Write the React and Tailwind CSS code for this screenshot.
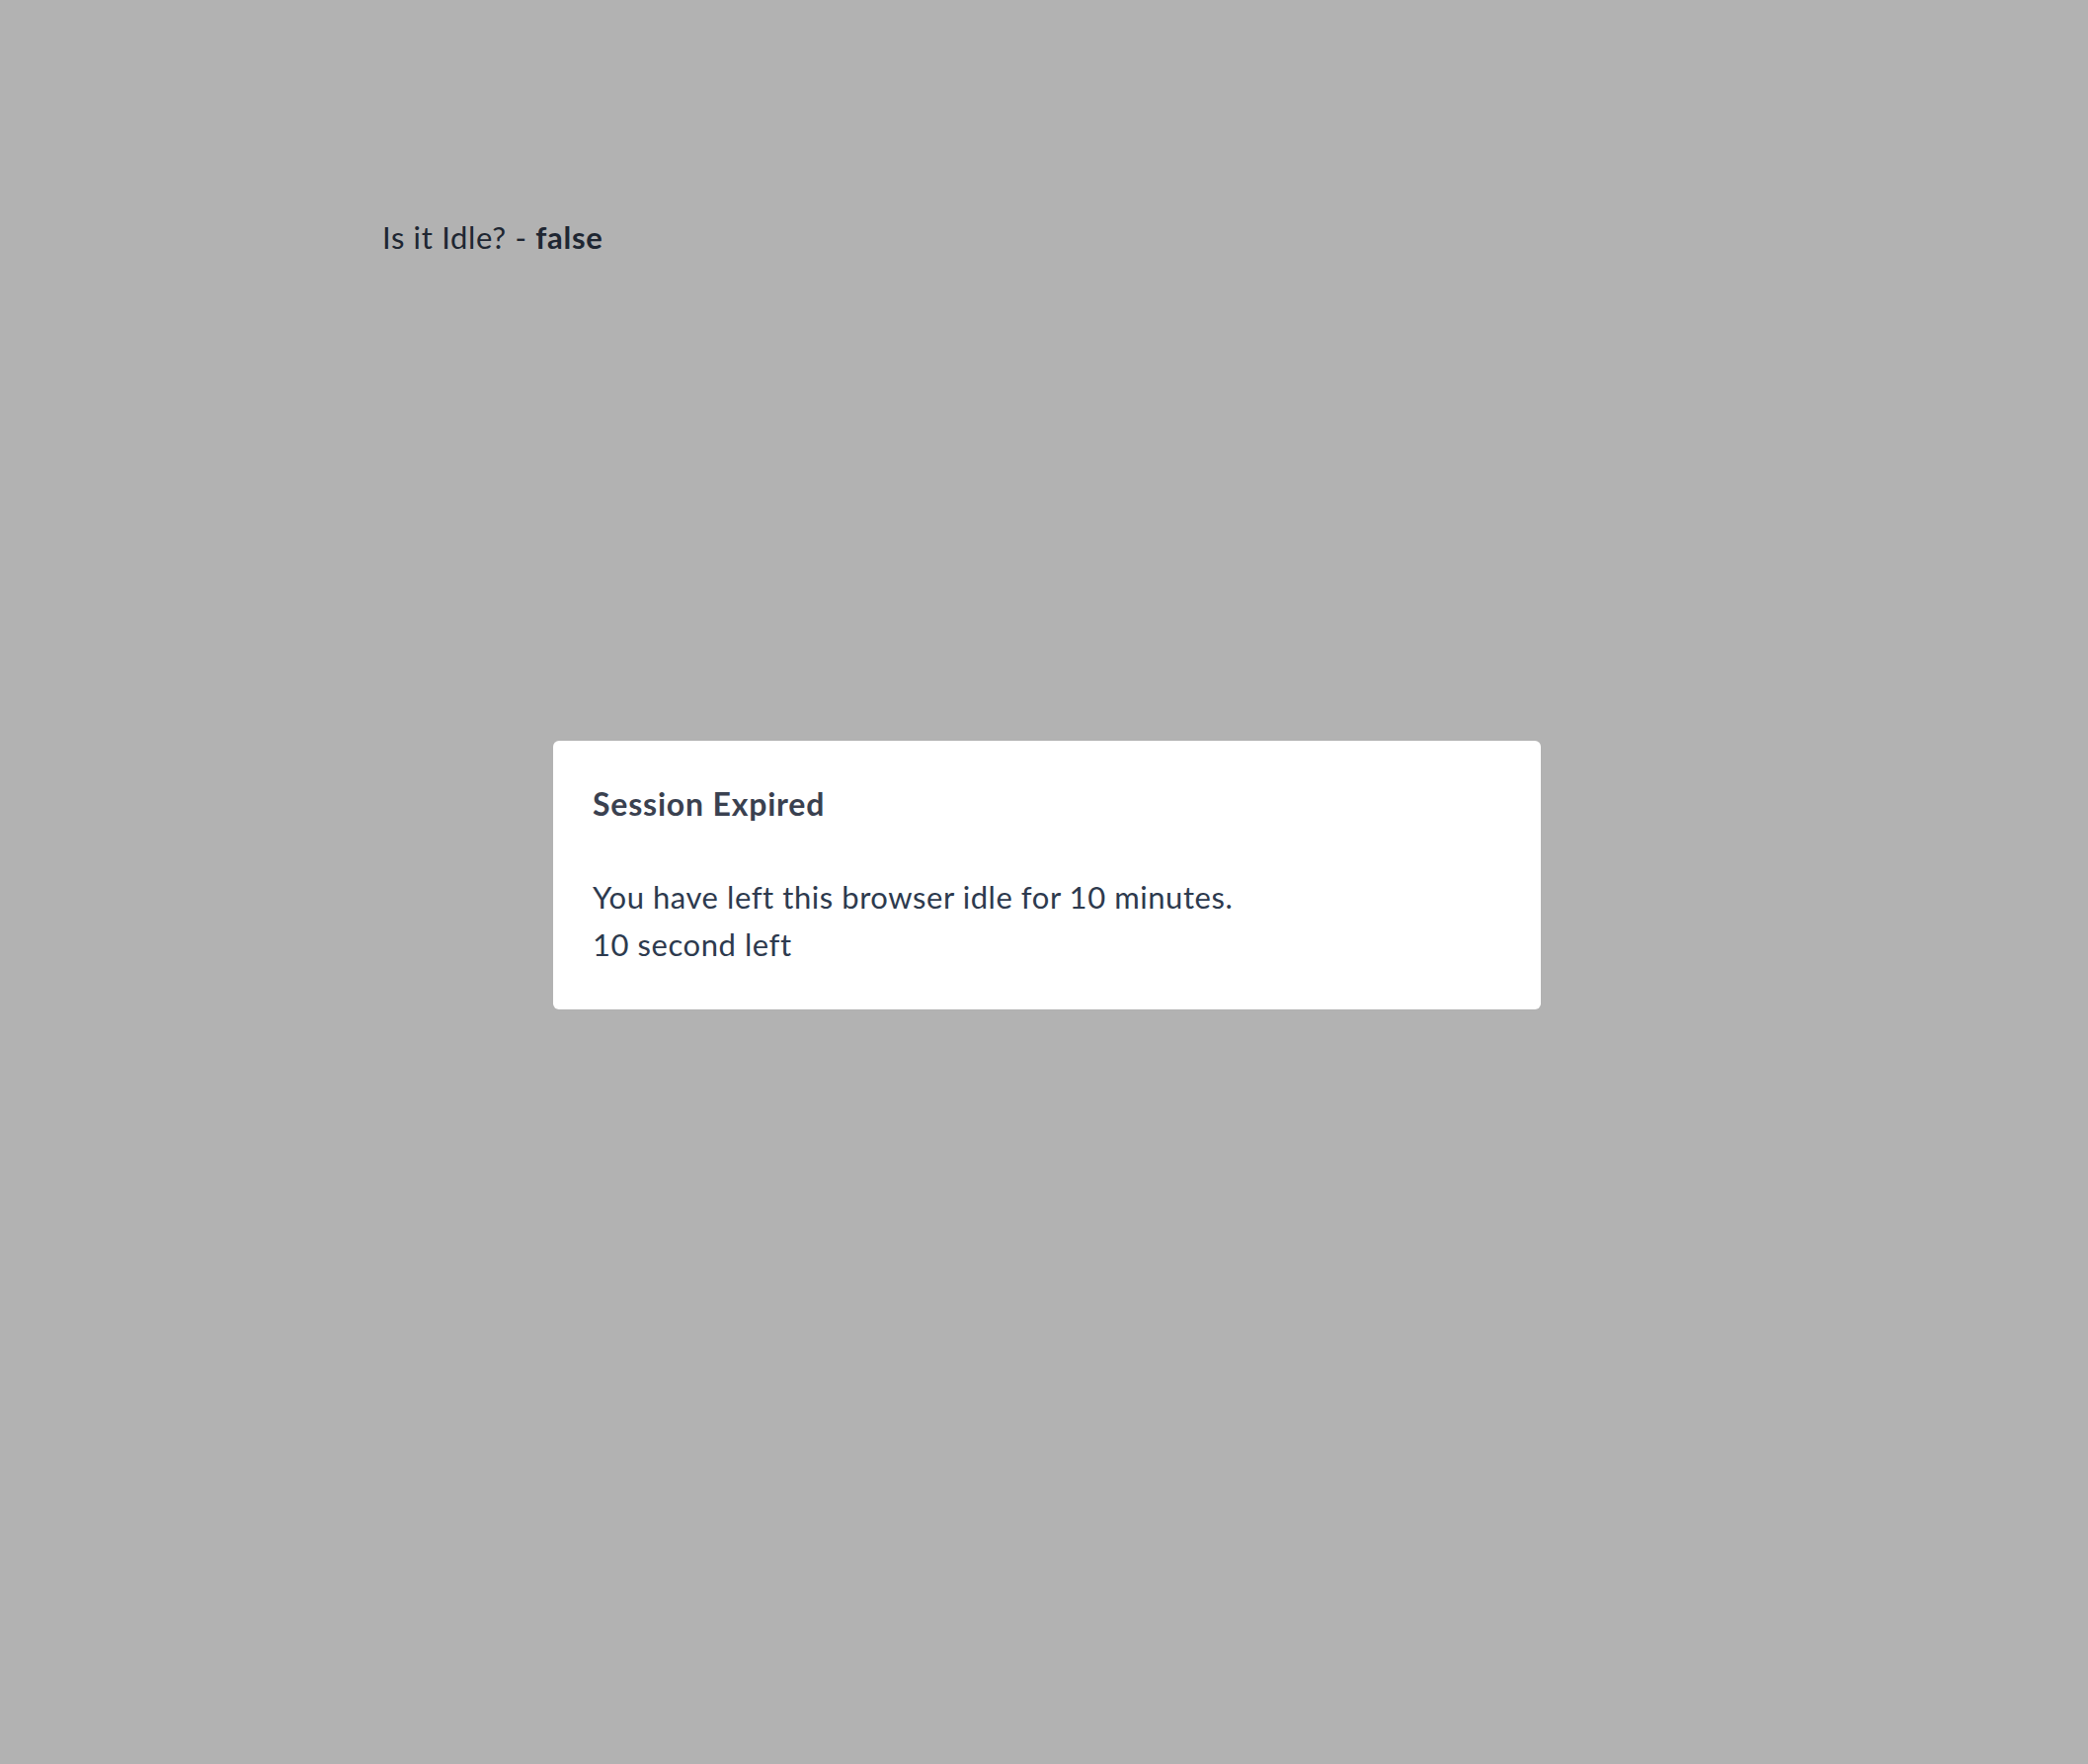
import React, { useState } from 'react';

const SessionModal = ({ minutes, seconds }) => {
    return (
        <div className="fixed inset-0 bg-black/30 flex items-center justify-center pb-[14px] pl-[6px]">
            <div className="bg-white rounded-[6px] w-[1000px] h-[272px] px-[40px] pt-[40px]">
                <h2 className="text-[32px] leading-[48px] font-bold tracking-[0.025em] text-[#3a4150]">Session Expired</h2>
                <div className="mt-[46px] text-[31px] leading-[48px] tracking-[0.018em] text-[#2d3a4e]">
                    <p>You have left this browser idle for {minutes} minutes.</p>
                    <p>{seconds} second left</p>
                </div>
            </div>
        </div>
    );
};

export default function App() {
    const [idle] = useState(false);

    return (
        <div className="min-h-screen bg-white font-['Lato',sans-serif]">
            <div className="pt-[216px] pl-[387px] text-[31px] leading-[48px] tracking-[0.022em] text-[#2d3748]">
                Is it Idle? - <span className="font-bold">{String(idle)}</span>
            </div>
            <SessionModal minutes={10} seconds={10} />
        </div>
    );
}
